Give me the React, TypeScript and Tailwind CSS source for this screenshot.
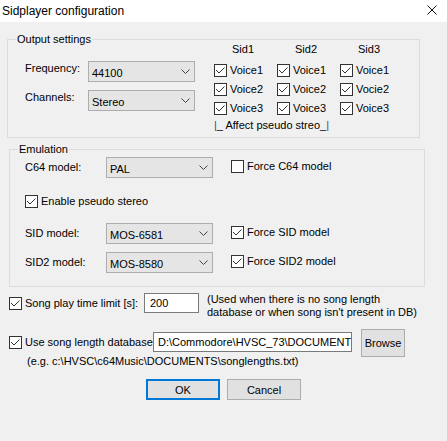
import React from "react";

interface CheckProps {
  label: string;
  checked?: boolean;
  className?: string;
}

function Check({ label, checked = true, className = "" }: CheckProps) {
  return (
    <div className={`flex h-[13px] items-center ${className}`}>
      <span className="flex h-[13px] w-[13px] shrink-0 items-center justify-center border border-[#333333] bg-white">
        {checked && (
          <svg width="11" height="11" viewBox="0 0 11 11">
            <path d="M1 5 L4 8 L9.5 2.5" fill="none" stroke="#333333" strokeWidth="1" />
          </svg>
        )}
      </span>
      <span className="ml-[3px] whitespace-nowrap leading-[13px]">{label}</span>
    </div>
  );
}

function Combo({ value, className = "" }: { value: string; className?: string }) {
  return (
    <div
      className={`flex h-[21px] w-[107px] shrink-0 items-center justify-between border border-[#adadad] bg-[#e5e5e5] pl-[3px] pr-[4px] ${className}`}
    >
      <span className="pt-[2px] leading-[14px]">{value}</span>
      <svg width="9" height="5" viewBox="0 0 9 5">
        <path d="M0.5 0.5 L4.5 4.5 L8.5 0.5" fill="none" stroke="#444444" strokeWidth="1" />
      </svg>
    </div>
  );
}

function Legend({ title }: { title: string }) {
  return (
    <span className="absolute left-[8px] top-[-9px] bg-[#f0f0f0] px-[1px] leading-[16px]">
      {title}
    </span>
  );
}

export default function App() {
  const sids = [
    { name: "Sid1", voices: ["Voice1", "Voice2", "Voice3"] },
    { name: "Sid2", voices: ["Voice1", "Voice2", "Voice3"] },
    { name: "Sid3", voices: ["Voice1", "Vocie2", "Voice3"] },
  ];

  return (
    <div className="h-[441px] w-[447px] overflow-hidden bg-[#f0f0f0] font-['Liberation_Sans',Arial,sans-serif] text-[11px] text-black">
      {/* title bar */}
      <div className="flex h-[22px] items-center justify-between bg-white pl-[2px] pr-[10px]">
        <span className="text-[12px] leading-[16px]">Sidplayer configuration</span>
        <svg width="10" height="10" viewBox="0 0 10 10" className="-mt-[2px]">
          <path d="M0.5 0.5 L9.5 9.5 M9.5 0.5 L0.5 9.5" stroke="#111111" strokeWidth="1" />
        </svg>
      </div>

      {/* output settings */}
      <div className="relative ml-[7px] mt-[17px] flex h-[99px] w-[413px] border border-[#dcdcdc]">
        <Legend title="Output settings" />
        <div className="flex flex-col gap-[8px] pl-[17px] pt-[21px]">
          <div className="flex items-start">
            <span className="w-[63px] leading-[14px]">Frequency:</span>
            <Combo value="44100" />
          </div>
          <div className="flex items-start">
            <span className="w-[63px] leading-[14px]">Channels:</span>
            <Combo value="Stereo" />
          </div>
        </div>
        <div className="ml-[19px] pt-[1px]">
          <div className="grid grid-cols-[63px_63px_63px]">
            {sids.map((sid) => (
              <div key={sid.name} className="flex flex-col">
                <span className="h-[16px] pl-[18px] leading-[16px]">{sid.name}</span>
                <div className="mt-[7px] flex flex-col gap-[6px]">
                  {sid.voices.map((v) => (
                    <Check key={v} label={v} />
                  ))}
                </div>
              </div>
            ))}
          </div>
          <div className="mt-[2px] whitespace-nowrap leading-[16px]">
            <span className="text-[#3b4a8c]">|</span>_ Affect pseudo streo_<span className="text-[#3b4a8c]">|</span>
          </div>
        </div>
      </div>

      {/* emulation */}
      <div className="relative ml-[9px] mt-[11px] h-[138px] w-[416px] border border-[#dcdcdc] pl-[15px] pt-[7px]">
        <Legend title="Emulation" />
        <div className="flex items-center">
          <span className="w-[81px] pb-[2px] leading-[16px]">C64 model:</span>
          <Combo value="PAL" />
          <Check label="Force C64 model" checked={false} className="ml-[18px] -mt-[2px]" />
        </div>
        <Check label="Enable pseudo stereo" className="mt-[17px]" />
        <div className="mt-[15px] flex items-center">
          <span className="w-[81px] pb-[2px] leading-[16px]">SID model:</span>
          <Combo value="MOS-6581" />
          <Check label="Force SID model" className="ml-[18px] -mt-[2px]" />
        </div>
        <div className="mt-[8px] flex items-center">
          <span className="w-[81px] pb-[2px] leading-[16px]">SID2 model:</span>
          <Combo value="MOS-8580" />
          <Check label="Force SID2 model" className="ml-[18px] -mt-[2px]" />
        </div>
      </div>

      {/* song time limit */}
      <div className="ml-[9px] mt-[6px] flex items-start">
        <Check label="Song play time limit [s]:" className="mt-[4px] w-[135px]" />
        <div className="h-[20px] w-[55px] shrink-0 border border-[#7a7a7a] bg-white pl-[5px] leading-[18px]">
          200
        </div>
        <div className="ml-[8px] whitespace-nowrap leading-[13px]">
          (Used when there is no song length
          <br />
          database or when song isn't present in DB)
        </div>
      </div>

      {/* song length database */}
      <div className="ml-[9px] mt-[13px] flex items-start">
        <div className="flex flex-col">
          <div className="flex items-center">
            <Check label="Use song length database" className="w-[144px]" />
            <div className="h-[20px] w-[199px] overflow-hidden whitespace-nowrap border border-[#7a7a7a] bg-white pl-[4px] leading-[18px]">
              D:\Commodore\HVSC_73\DOCUMENTS\songlengths.txt
            </div>
          </div>
          <span className="mt-[1px] whitespace-nowrap pl-[18px] leading-[16px]">
            (e.g. c:\HVSC\c64Music\DOCUMENTS\songlengths.txt)
          </span>
        </div>
        <button className="-mt-[3px] ml-[9px] h-[28px] w-[44px] border border-[#adadad] bg-[#e1e1e1] leading-[16px]">
          Browse
        </button>
      </div>

      {/* buttons */}
      <div className="mt-[10px] flex justify-center gap-[7px]">
        <button className="h-[21px] w-[74px] border-2 border-[#0078d7] bg-[#e1e1e1] leading-[16px]">OK</button>
        <button className="h-[21px] w-[74px] border border-[#adadad] bg-[#e1e1e1] leading-[16px]">Cancel</button>
      </div>
    </div>
  );
}
